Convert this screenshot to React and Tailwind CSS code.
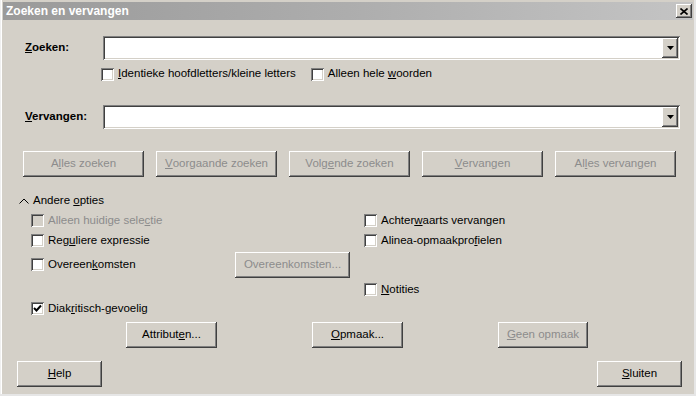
import React from "react";

const raised =
  "bg-[#d4d0c8] shadow-[inset_-1px_-1px_#404040,inset_1px_1px_#ffffff,inset_-2px_-2px_#808080]";
const sunken =
  "bg-white shadow-[inset_1px_1px_#808080,inset_-1px_-1px_#ffffff,inset_2px_2px_#404040,inset_-2px_-2px_#d4d0c8]";

function Button({ children, disabled, className = "" }) {
  return (
    <div
      className={`${raised} h-[26px] shrink-0 flex items-center justify-center ${
        disabled ? "text-[#8c8c8c]" : "text-black"
      } ${className}`}
    >
      {children}
    </div>
  );
}

function Check({ checked, disabled, children, className = "" }) {
  return (
    <div className={`flex items-center h-[16px] ${className}`}>
      <div
        className={`w-[13px] h-[13px] shrink-0 flex items-center justify-center ${
          disabled ? "bg-[#d4d0c8]" : "bg-white"
        } shadow-[inset_1px_1px_#808080,inset_-1px_-1px_#ffffff,inset_2px_2px_#404040,inset_-2px_-2px_#d4d0c8]`}
      >
        {checked && (
          <svg width="9" height="9" viewBox="0 0 9 9">
            <path d="M1 4 L3.5 6.5 L8 1.5" stroke="black" strokeWidth="2" fill="none" />
          </svg>
        )}
      </div>
      <span className={`ml-[4px] ${disabled ? "text-[#8c8c8c]" : "text-black"}`}>
        {children}
      </span>
    </div>
  );
}

function Combo() {
  return (
    <div className={`${sunken} w-[577px] h-[24px] shrink-0 flex justify-end items-center pr-[2px]`}>
      <div className={`${raised} w-[16px] h-[20px] flex items-center justify-center`}>
        <svg width="7" height="4" viewBox="0 0 7 4">
          <path d="M0 0 H7 L3.5 4 Z" fill="black" />
        </svg>
      </div>
    </div>
  );
}

export default function App() {
  return (
    <div
      className="w-[696px] h-[396px] bg-[#e6e6e6] text-[11.5px] leading-none overflow-hidden"
      style={{ fontFamily: '"Liberation Sans", Arial, sans-serif' }}
    >
      <div className="w-[694px] h-[394px] bg-[#d4d0c8] pt-[2px] pl-[2px] flex flex-col shadow-[inset_1px_0_#f0f0f0,inset_2px_0_#ffffff]">
        {/* Title bar */}
        <div className="h-[18px] ml-[1px] mr-[1px] bg-gradient-to-r from-[#9a9a9a] via-[#adadad] to-[#c4c4c4] flex items-center justify-between pl-[3px] pr-[1px]">
          <span className="text-white font-bold text-[12px]">Zoeken en vervangen</span>
          <div className={`${raised} w-[16px] h-[14px] flex items-center justify-center`}>
            <svg width="8" height="7" viewBox="0 0 8 7">
              <path d="M0.5 0.5 L7.5 6.5 M7.5 0.5 L0.5 6.5" stroke="black" strokeWidth="1.6" />
            </svg>
          </div>
        </div>

        {/* Zoeken */}
        <div className="flex items-center mt-[16px]">
          <span className="w-[101px] shrink-0 pl-[23px] font-bold">
            <u>Z</u>oeken:
          </span>
          <Combo />
        </div>
        <div className="flex items-center ml-[99px] mt-[6px]">
          <Check>
            <u>I</u>dentieke hoofdletters/kleine letters
          </Check>
          <Check className="ml-[15px]">
            Alleen hele <u>w</u>oorden
          </Check>
        </div>

        {/* Vervangen */}
        <div className="flex items-center mt-[23px]">
          <span className="w-[101px] shrink-0 pl-[23px] font-bold">
            <u>V</u>ervangen:
          </span>
          <Combo />
        </div>

        {/* Action buttons */}
        <div className="flex gap-[12px] ml-[21px] mt-[22px]">
          <Button disabled className="w-[121px]">
            A<u>l</u>les zoeken
          </Button>
          <Button disabled className="w-[121px]">
            <u>V</u>oorgaande zoeken
          </Button>
          <Button disabled className="w-[121px]">
            Volg<u>e</u>nde zoeken
          </Button>
          <Button disabled className="w-[121px]">
            <u>V</u>ervangen
          </Button>
          <Button disabled className="w-[121px]">
            Al<u>l</u>es vervangen
          </Button>
        </div>

        {/* Andere opties */}
        <div className="flex items-center ml-[17px] mt-[18px]">
          <svg width="10" height="6" viewBox="0 0 10 6">
            <path d="M0.5 5.5 L5 1 L9.5 5.5" stroke="black" strokeWidth="1" fill="none" />
          </svg>
          <span className="ml-[4px]">
            Andere <u>o</u>pties
          </span>
        </div>

        <div className="grid grid-cols-[333px_1fr] ml-[29px] mt-[2px]">
          <div className="flex flex-col">
            <Check disabled className="mt-[4px]">
              Alleen huidige sele<u>c</u>tie
            </Check>
            <Check className="mt-[4px]">
              Reg<u>u</u>liere expressie
            </Check>
            <div className="flex items-center mt-[3px]">
              <Check className="w-[204px]">
                Overeen<u>k</u>omsten
              </Check>
              <Button disabled className="w-[115px]">
                Overeenkomsten...
              </Button>
            </div>
          </div>
          <div className="flex flex-col">
            <Check className="mt-[4px]">
              Achter<u>w</u>aarts vervangen
            </Check>
            <Check className="mt-[4px]">
              Alinea-opmaakpro<u>f</u>ielen
            </Check>
          </div>
        </div>
        <div className="ml-[362px] mt-[4px]">
          <Check>
            <u>N</u>otities
          </Check>
        </div>
        <div className="ml-[29px] mt-[3px]">
          <Check checked>
            Diak<u>r</u>itisch-gevoelig
          </Check>
        </div>

        <div className="flex ml-[124px] mt-[5px] gap-[95px]">
          <Button className="w-[91px]">
            Attribut<u>e</u>n...
          </Button>
          <Button className="w-[91px]">
            <u>O</u>pmaak...
          </Button>
          <Button disabled className="w-[90px]">
            <u>G</u>een opmaak
          </Button>
        </div>

        <div className="flex justify-between ml-[15px] mr-[12px] mt-[13px]">
          <Button className="w-[85px]">
            <u>H</u>elp
          </Button>
          <Button className="w-[85px]">
            <u>S</u>luiten
          </Button>
        </div>
      </div>
    </div>
  );
}
